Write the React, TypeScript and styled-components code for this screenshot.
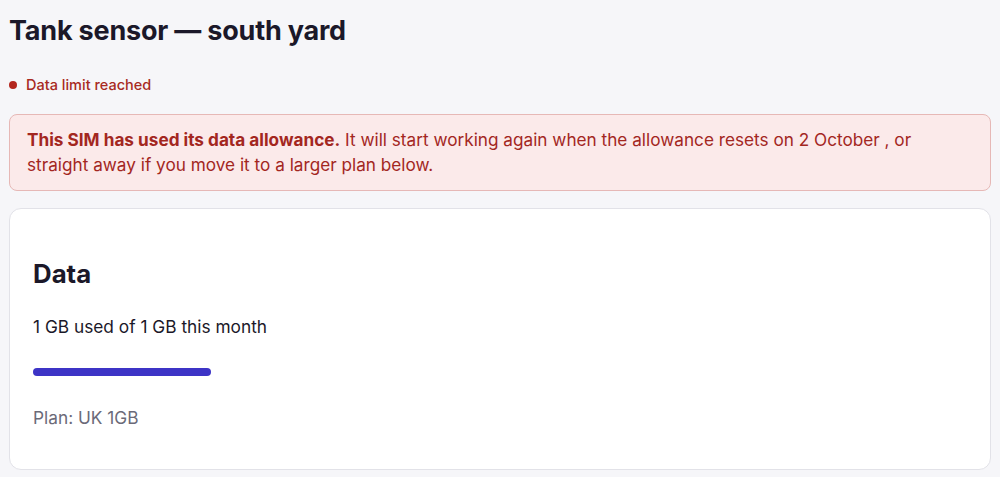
import React from "react";
import styled, { createGlobalStyle } from "styled-components";

const GlobalStyle = createGlobalStyle`
  html, body {
    margin: 0;
    padding: 0;
    background: #f6f6f9;
    font-family: Inter, "Noto Sans", sans-serif;
    color: #1b1829;
  }
`;

const Page = styled.main`
  padding: 14px 9px 8px 9px;
  display: flex;
  flex-direction: column;
`;

const Title = styled.h1`
  margin: 0;
  font-size: 27px;
  line-height: 34px;
  font-weight: 700;
  letter-spacing: -0.2px;
  color: #1b1829;
`;

const Status = styled.div`
  margin-top: 27px;
  display: flex;
  align-items: center;
  gap: 9px;
  font-size: 14.5px;
  line-height: 20px;
  font-weight: 500;
  color: #a82a22;
`;

const Dot = styled.span`
  width: 8px;
  height: 8px;
  border-radius: 50%;
  background: #b3261e;
`;

const Alert = styled.div`
  margin-top: 19px;
  padding: 12px 60px 13px 17px;
  border: 1px solid #e6b8b6;
  border-radius: 8px;
  background: #fbeaea;
  color: #a3271f;
  font-size: 17.2px;
  line-height: 25px;
`;

const Strong = styled.strong`
  font-weight: 700;
`;

const Card = styled.section`
  margin-top: 17px;
  padding: 50px 23px 39px 23px;
  background: #ffffff;
  border: 1px solid #e2e2e8;
  border-radius: 12px;
  display: flex;
  flex-direction: column;
`;

const CardTitle = styled.h2`
  margin: 0;
  font-size: 25.8px;
  line-height: 30px;
  font-weight: 700;
  color: #1b1829;
`;

const Usage = styled.p`
  margin: 26px 0 0 0;
  font-size: 17.3px;
  line-height: 24px;
  color: #1b1829;
`;

const Bar = styled.div<{ $width: number }>`
  margin-top: 29px;
  width: ${(p) => p.$width}px;
  height: 8px;
  border-radius: 4px;
  background: #3d34c6;
`;

const Plan = styled.p`
  margin: 30px 0 0 0;
  font-size: 17.3px;
  line-height: 24px;
  color: #6b6a78;
`;

export default function App() {
  return (
    <>
      <GlobalStyle />
      <Page>
        <Title>Tank sensor — south yard</Title>
        <Status>
          <Dot />
          Data limit reached
        </Status>
        <Alert>
          <Strong>This SIM has used its data allowance.</Strong> It will start
          working again when the allowance resets on 2 October , or straight
          away if you move it to a larger plan below.
        </Alert>
        <Card>
          <CardTitle>Data</CardTitle>
          <Usage>1 GB used of 1 GB this month</Usage>
          <Bar $width={178} />
          <Plan>Plan: UK 1GB</Plan>
        </Card>
      </Page>
    </>
  );
}
